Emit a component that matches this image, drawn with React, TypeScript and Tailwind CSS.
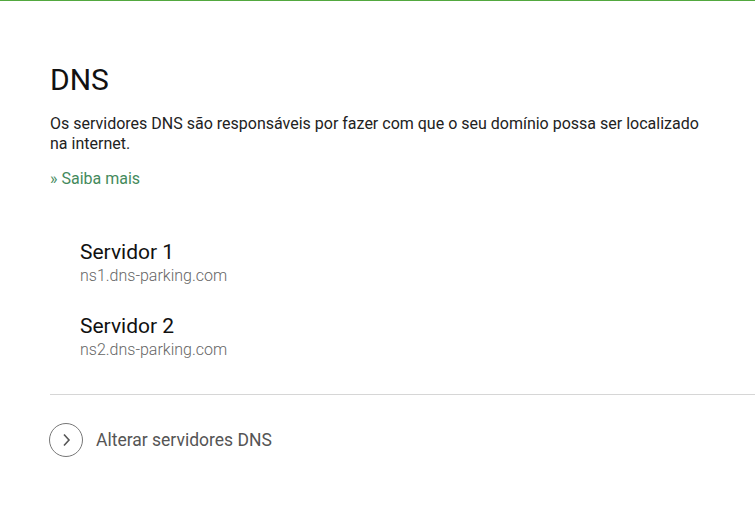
import React from "react";

const servers = [
  { name: "Servidor 1", host: "ns1.dns-parking.com" },
  { name: "Servidor 2", host: "ns2.dns-parking.com" },
];

export default function App() {
  return (
    <div className="min-h-screen bg-white border-t border-[#52a83f] font-['Roboto',sans-serif]">
      <div className="pl-[50px] pt-[61px]">
        <h1 className="text-[30px] leading-[36px] text-[#111] font-normal">DNS</h1>

        <p className="mt-[16px] max-w-[660px] text-[16px] leading-[20px] text-[#222]">
          Os servidores DNS são responsáveis por fazer com que o seu domínio possa ser localizado na internet.
        </p>

        <a href="#" className="mt-[15px] block text-[16px] leading-[20px] text-[#448a5c]">
          » Saiba mais
        </a>

        {/* Server list */}
        <div className="mt-[50px] pl-[30px] flex flex-col gap-[26px]">
          {servers.map((s) => (
            <div key={s.name} className="flex flex-col">
              <span className="text-[21px] leading-[26px] text-[#111]">{s.name}</span>
              <span className="text-[16px] leading-[22px] text-[#666] font-light">{s.host}</span>
            </div>
          ))}
        </div>

        <div className="mt-[33px] h-px bg-[#d6d6d6]" />

        <a href="#" className="mt-[28px] flex items-center gap-[13px]">
          <span className="w-[34px] h-[34px] -ml-px rounded-full border border-[#777] flex items-center justify-center">
            <svg width="12" height="14" viewBox="0 0 12 14" fill="none">
              <path d="M4 1.5 L9 7 L4 12.5" stroke="#555" strokeWidth="1.6" />
            </svg>
          </span>
          <span className="text-[17.5px] leading-[22px] text-[#555]">Alterar servidores DNS</span>
        </a>
      </div>
    </div>
  );
}
